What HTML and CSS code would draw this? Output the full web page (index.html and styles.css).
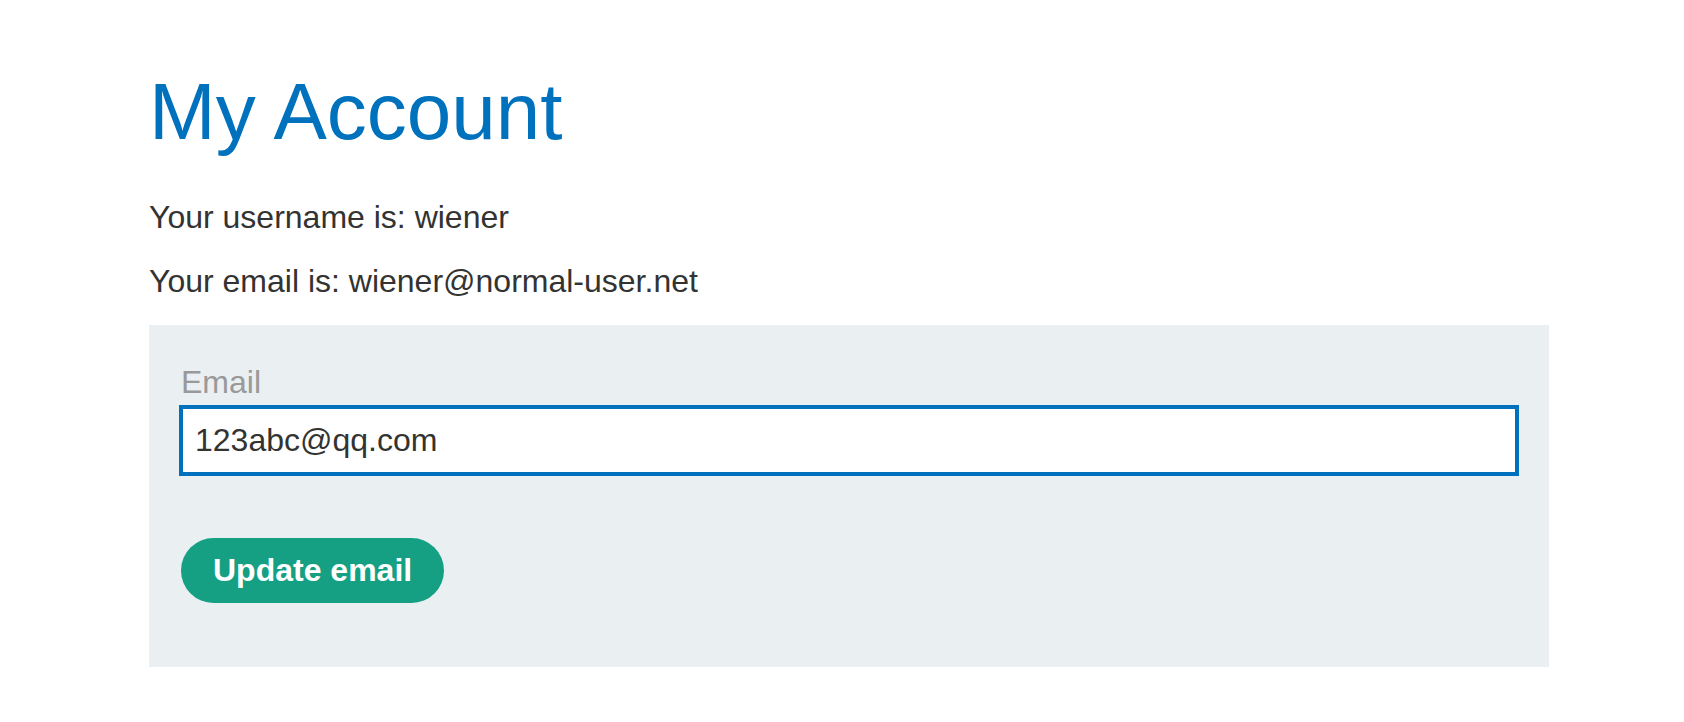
FILE: index.html
```html
<!DOCTYPE html>
<html lang="en">
<head>
<meta charset="utf-8">
<title>My Account</title>
<link rel="stylesheet" href="styles.css">
</head>
<body>
<main class="page">
  <h1 class="title">My Account</h1>
  <p class="info info-first">Your username is: wiener</p>
  <p class="info info-second">Your email is: wiener@normal-user.net</p>
  <form class="panel" onsubmit="return false">
    <label class="field-label" for="email">Email</label>
    <input class="field-input" id="email" type="email" value="123abc@qq.com">
    <button class="btn" type="submit">Update email</button>
  </form>
</main>
</body>
</html>
```

FILE: styles.css
```css
* { box-sizing: border-box; }
html, body { margin: 0; padding: 0; background: #ffffff; }
body {
  font-family: "Liberation Sans", Arial, Helvetica, sans-serif;
  color: #333332;
}
.page {
  width: 1400px;
  margin-left: 149px;
  padding-top: 66px;
  display: flex;
  flex-direction: column;
}
.title {
  margin: 0;
  font-size: 80px;
  line-height: 92px;
  font-weight: 400;
  color: #0071bc;
}
.info {
  margin: 0;
  font-size: 32px;
  line-height: 37px;
}
.info-first { margin-top: 41px; }
.info-second { margin-top: 27px; }
.panel {
  margin-top: 25px;
  background: #eaeff2;
  padding: 39px 30px 64px 30px;
  display: flex;
  flex-direction: column;
  align-items: flex-start;
}
.field-label {
  font-size: 32px;
  line-height: 37px;
  color: #999999;
  margin: 0 0 4px 2px;
}
.field-input {
  width: 100%;
  height: 71px;
  border: 4px solid #0071bc;
  background: #ffffff;
  padding: 0 12px;
  font-family: "Liberation Sans", Arial, Helvetica, sans-serif;
  font-size: 32px;
  color: #333332;
  outline: none;
  margin: 0;
}
.btn {
  margin: 62px 0 0 2px;
  height: 65px;
  padding: 0 32px;
  border: none;
  border-radius: 33px;
  background: #16a083;
  color: #ffffff;
  font-family: "Liberation Sans", Arial, Helvetica, sans-serif;
  font-size: 32px;
  font-weight: 700;
  line-height: 65px;
  cursor: pointer;
}
```
